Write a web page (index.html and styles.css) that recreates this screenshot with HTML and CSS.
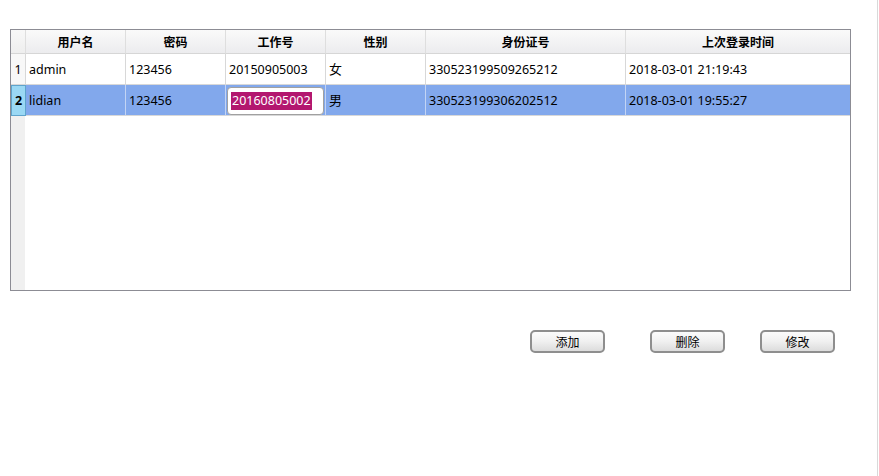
FILE: index.html
```html
<!DOCTYPE html>
<html>
<head>
<meta charset="utf-8">
<link rel="stylesheet" href="styles.css">
</head>
<body>
<div class="page">
  <div class="main">
    <div class="grid">
      <div class="row head">
        <div class="cell rh"></div>
        <div class="cell c1">用户名</div>
        <div class="cell c1">密码</div>
        <div class="cell c1">工作号</div>
        <div class="cell c1">性别</div>
        <div class="cell c2">身份证号</div>
        <div class="cell c3">上次登录时间</div>
      </div>
      <div class="row body">
        <div class="cell rh">1</div>
        <div class="cell c1">admin</div>
        <div class="cell c1">123456</div>
        <div class="cell c1">20150905003</div>
        <div class="cell c1 cjk">女</div>
        <div class="cell c2">330523199509265212</div>
        <div class="cell c3">2018-03-01 21:19:43</div>
      </div>
      <div class="row body sel">
        <div class="cell rh">2</div>
        <div class="cell c1">lidian</div>
        <div class="cell c1">123456</div>
        <div class="cell c1 editcell"><div class="editor"><span class="hl">20160805002</span></div></div>
        <div class="cell c1 cjk">男</div>
        <div class="cell c2">330523199306202512</div>
        <div class="cell c3">2018-03-01 19:55:27</div>
      </div>
      <div class="rest"><div class="rest-rh"></div></div>
    </div>
    <div class="buttons">
      <button class="btn b-add">添加</button>
      <button class="btn b-del">删除</button>
      <button class="btn b-mod">修改</button>
    </div>
  </div>
  <div class="edge"></div>
</div>
</body>
</html>
```

FILE: styles.css
```css
html, body {
  margin: 0;
  padding: 0;
  background: #ffffff;
}
.page {
  display: flex;
  width: 879px;
  height: 476px;
  overflow: hidden;
}
.main {
  width: 877px;
  padding-left: 10px;
  padding-top: 29px;
  box-sizing: border-box;
}
.edge {
  width: 1px;
  background: #d9d9d9;
  height: 476px;
}
.grid {
  width: 841px;
  height: 262px;
  box-sizing: border-box;
  border: 1px solid #8c8c94;
  display: flex;
  flex-direction: column;
  font-family: "Noto Sans", "Noto Sans CJK SC", sans-serif;
  font-size: 12.5px;
  color: #000;
}
.row {
  display: flex;
  flex: none;
}
.cell {
  box-sizing: border-box;
  border-right: 1px solid #d8d8d8;
  border-bottom: 1px solid #d8d8d8;
  display: flex;
  align-items: center;
  white-space: nowrap;
  overflow: hidden;
}
.rh { width: 15px; justify-content: center; }
.c1 { width: 100px; padding-left: 3px; }
.c2 { width: 200px; padding-left: 3px; }
.c3 { width: 224px; padding-left: 3px; border-right: none; }

.head .cell {
  height: 24px;
  justify-content: center;
  padding-left: 0;
  font-family: "Noto Sans CJK SC", sans-serif;
  font-weight: bold;
  font-size: 12px;
  background: linear-gradient(#fafafa, #ececee);
  border-right-color: #dedede;
  border-bottom-color: #d6d6d6;
}
.head .cell.rh { background: linear-gradient(#f8f8f8, #eeeeee); }
.body .cell { height: 31px; }
.body .cell.rh { background: #f8f8f8; padding: 0; }
.body .cell.cjk { font-size: 13px; padding-bottom: 2px; }
.sel .cell { background: #82a8ec; border-bottom-color: #d8d8d8; border-right-color: #c3d4f4; }
.sel .cell.rh {
  background: #9ad8f4;
  border: 1px solid #5fa4cc;
  font-weight: bold;
}
.sel .cell.editcell { padding: 1px 1px 0 1px; }
.editor {
  box-sizing: border-box;
  width: 97px;
  height: 28px;
  background: #ffffff;
  border: 1px solid #a0a0a0;
  border-radius: 4px;
  display: flex;
  align-items: center;
  padding-left: 3px;
}
.hl {
  background: #b3176f;
  color: #ffffff;
  line-height: 18px;
  padding: 0 1px;
}
.rest {
  flex: 1;
  display: flex;
}
.rest-rh {
  width: 14px;
  background: #f0f0f0;
}
.buttons {
  display: flex;
  padding-left: 520px;
  margin-top: 39px;
}
.btn {
  width: 75px;
  height: 23px;
  box-sizing: border-box;
  border: 2px solid #8e8e8e;
  border-radius: 5px;
  background: linear-gradient(#fbfbfb, #f0f0f0 50%, #dcdcdc);
  font-family: "Noto Sans CJK SC", sans-serif;
  font-size: 12px;
  color: #000;
  padding: 0;
  line-height: 17px;
}
.b-del { margin-left: 45px; }
.b-mod { margin-left: 35px; }
```
